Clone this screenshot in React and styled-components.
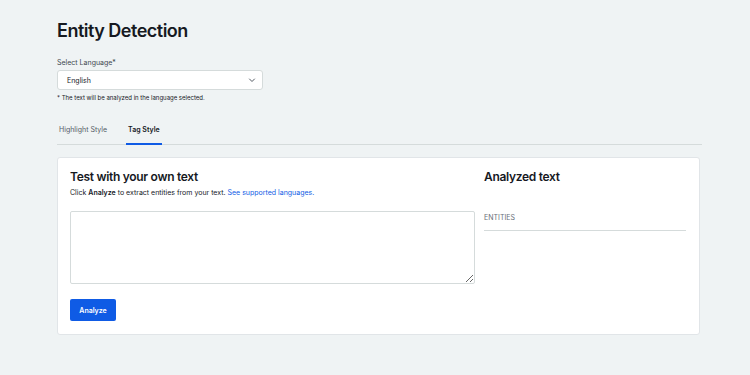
import React from "react";
import styled, { createGlobalStyle } from "styled-components";

const GlobalStyle = createGlobalStyle`
  html, body {
    margin: 0;
    padding: 0;
    background: #eff3f4;
  }
  body {
    font-family: 'Inter', 'Liberation Sans', sans-serif;
    color: #16191f;
  }
`;

const Page = styled.div`
  padding: 18px 50px 40px 57px;
  box-sizing: border-box;
  width: 750px;
`;

const Title = styled.h1`
  margin: 0 0 14px;
  font-size: 18px;
  line-height: 26px;
  font-weight: 600;
  letter-spacing: -0.5px;
`;

const Field = styled.div`
  display: flex;
  flex-direction: column;
  width: 206px;
`;

const Label = styled.label`
  font-size: 7px;
  line-height: 10px;
  color: #414750;
  margin-bottom: 2px;
`;

const SelectBox = styled.div`
  height: 20px;
  box-sizing: border-box;
  border: 1px solid #d5dbdb;
  border-radius: 3px;
  background: #fff;
  display: flex;
  align-items: center;
  justify-content: space-between;
  padding: 0 6px 0 9px;
  font-size: 7px;
  color: #16191f;
`;

const Hint = styled.div`
  font-size: 6px;
  line-height: 8px;
  color: #16191f;
  margin-top: 4px;
  white-space: nowrap;
`;

const Tabs = styled.div`
  display: flex;
  margin-top: 17px;
  border-bottom: 1px solid #d5dbdb;
  width: 643px;
  padding-left: 2px;
`;

const Tab = styled.div`
  font-size: 7px;
  line-height: 10px;
  padding: 6px 0 9px;
  margin-right: ${(p) => (p.$active ? "0" : "21px")};
  color: ${(p) => (p.$active ? "#16191f" : "#545b64")};
  font-weight: ${(p) => (p.$active ? 600 : 400)};
  position: relative;
  ${(p) =>
    p.$active &&
    `
    &::after {
      content: "";
      position: absolute;
      left: -2px;
      right: -2px;
      bottom: -1px;
      height: 2px;
      background: #0f5be5;
    }
  `}
`;

const Card = styled.div`
  margin-top: 12px;
  width: 643px;
  box-sizing: border-box;
  background: #fff;
  border: 1px solid #e1e5e8;
  border-radius: 3px;
  padding: 11px 13px 13px 12px;
  display: flex;
  gap: 9px;
`;

const Column = styled.div`
  display: flex;
  flex-direction: column;
  width: ${(p) => p.$width}px;
`;

const Heading = styled.h2`
  margin: 0;
  font-size: 12px;
  line-height: 15px;
  font-weight: 600;
  letter-spacing: -0.3px;
`;

const Lead = styled.p`
  margin: 4px 0 0;
  font-size: 7px;
  line-height: 10px;
  color: #16191f;

  b {
    font-weight: 600;
  }
  a {
    color: #0f5be5;
    text-decoration: none;
  }
`;

const TextArea = styled.textarea`
  margin-top: 13px;
  height: 73px;
  box-sizing: border-box;
  border: 1px solid #d5dbdb;
  border-radius: 2px;
  resize: vertical;
  font-family: inherit;
  font-size: 8px;
  width: 100%;
`;

const Button = styled.button`
  margin-top: 15px;
  align-self: flex-start;
  width: 46px;
  height: 22px;
  border: none;
  border-radius: 2px;
  background: #0f5be5;
  color: #fff;
  font-family: inherit;
  font-size: 7px;
  font-weight: 600;
  padding: 0;
`;

const Caption = styled.div`
  margin-top: 29px;
  font-size: 7px;
  line-height: 10px;
  color: #687078;
  padding-bottom: 7px;
  border-bottom: 1px solid #d5dbdb;
`;

const Chevron = () => (
  <svg width="8" height="8" viewBox="0 0 16 16" fill="none">
    <path d="M3 6l5 5 5-5" stroke="#545b64" strokeWidth="2" strokeLinecap="round" strokeLinejoin="round" />
  </svg>
);

export default function App() {
  return (
    <>
      <GlobalStyle />
      <Page>
        <Title>Entity Detection</Title>
        <Field>
          <Label>Select Language*</Label>
          <SelectBox>
            <span>English</span>
            <Chevron />
          </SelectBox>
          <Hint>* The text will be analyzed in the language selected.</Hint>
        </Field>
        <Tabs>
          <Tab>Highlight Style</Tab>
          <Tab $active>Tag Style</Tab>
        </Tabs>
        <Card>
          <Column $width={405}>
            <Heading>Test with your own text</Heading>
            <Lead>
              Click <b>Analyze</b> to extract entities from your text.{" "}
              <a href="#">See supported languages.</a>
            </Lead>
            <TextArea />
            <Button>Analyze</Button>
          </Column>
          <Column $width={202}>
            <Heading>Analyzed text</Heading>
            <Caption>ENTITIES</Caption>
          </Column>
        </Card>
      </Page>
    </>
  );
}
